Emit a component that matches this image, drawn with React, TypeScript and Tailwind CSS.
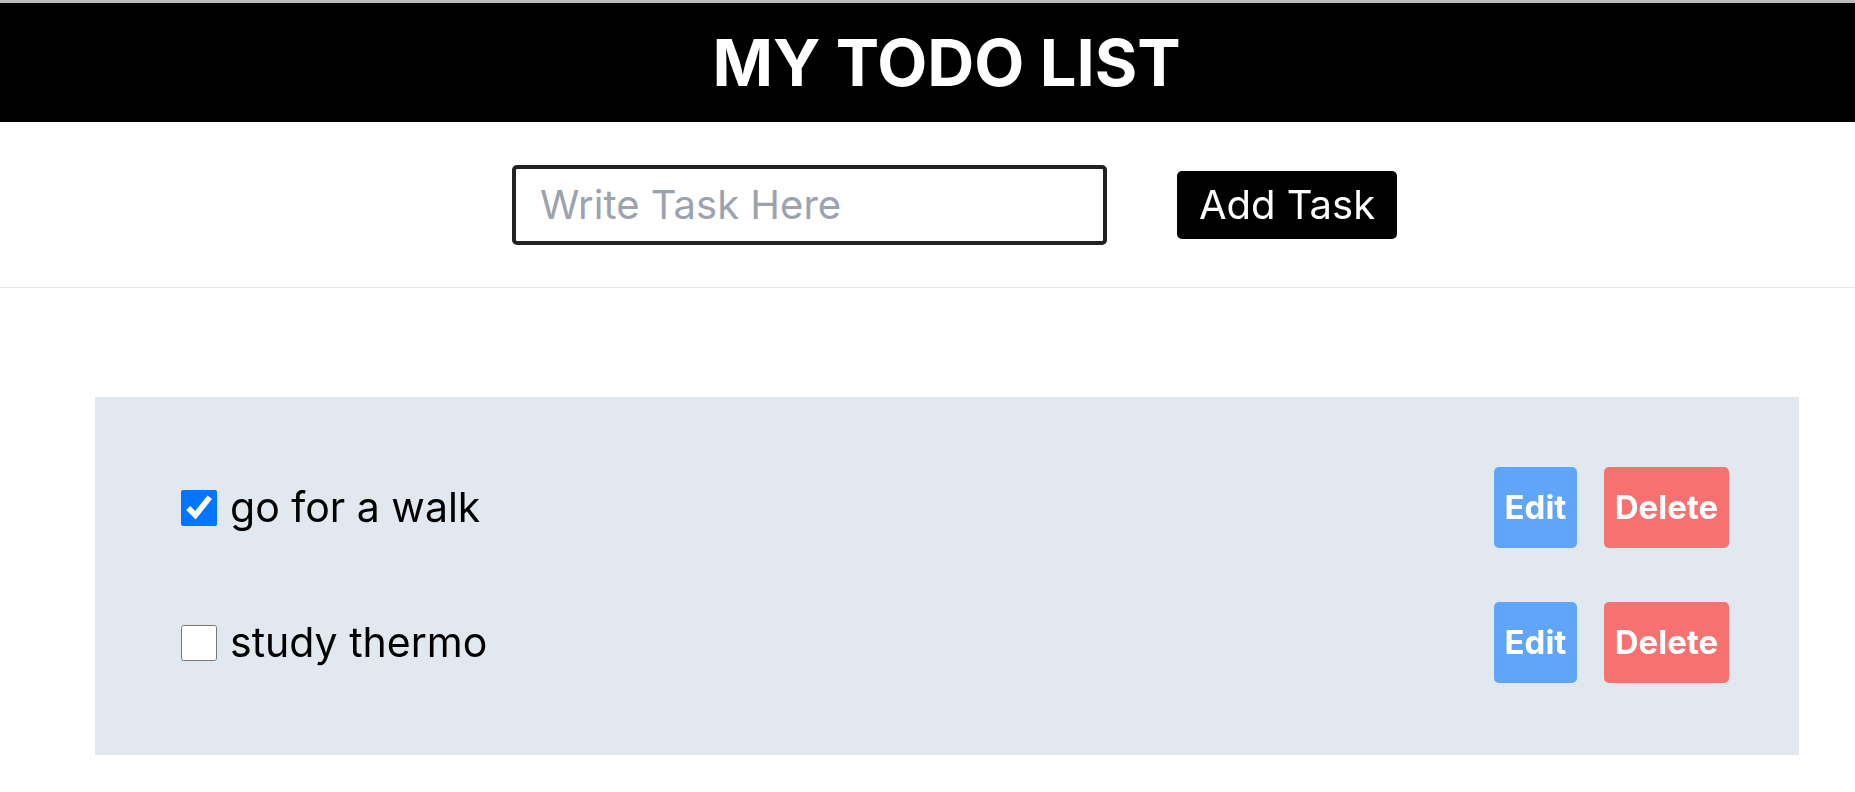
import React from "react";

const tasks = [
  { text: "go for a walk", done: true },
  { text: "study thermo", done: false },
];

export default function App() {
  return (
    <div className="min-h-[792px] bg-white" style={{ fontFamily: "Inter, 'Noto Sans', sans-serif" }}>
      <div className="h-[3px] bg-[#bdbdbd]" />
      <header className="h-[119px] bg-black flex items-center justify-center pl-[38px]">
        <h1 className="text-white font-bold text-[65px] leading-none">MY TODO LIST</h1>
      </header>
      <div className="flex items-center justify-center pl-[54px] h-[166px] border-b border-[#e5e7eb]">
        <input
          type="text"
          autoFocus
          placeholder="Write Task Here"
          className="w-[595px] h-[80px] border-4 border-[#222222] rounded-[5px] px-[24px] text-[40px] text-black placeholder:text-[#9ca3af] outline-none caret-black"
        />
        <button className="ml-[70px] w-[220px] h-[68px] bg-black text-white text-[40px] rounded-[5px]">
          Add Task
        </button>
      </div>
      <div className="mt-[109px] ml-[95px] mr-[56px] bg-[#e2e8f0] pt-[70px] pb-[72px] pl-[86px] pr-[70px] flex flex-col gap-[54px]">
        {tasks.map((t) => (
          <div key={t.text} className="flex items-center h-[81px]">
            <input
              type="checkbox"
              defaultChecked={t.done}
              className="w-[36px] h-[36px] m-0 accent-[#0075ff]"
            />
            <span className="ml-[13px] text-[41px] text-black">{t.text}</span>
            <div className="ml-auto flex gap-[27px]">
              <button className="w-[83px] h-[81px] bg-[#60a5fa] text-white font-bold text-[33px] rounded-[5px]">
                Edit
              </button>
              <button className="w-[125px] h-[81px] bg-[#f87171] text-white font-bold text-[33px] rounded-[5px]">
                Delete
              </button>
            </div>
          </div>
        ))}
      </div>
    </div>
  );
}
